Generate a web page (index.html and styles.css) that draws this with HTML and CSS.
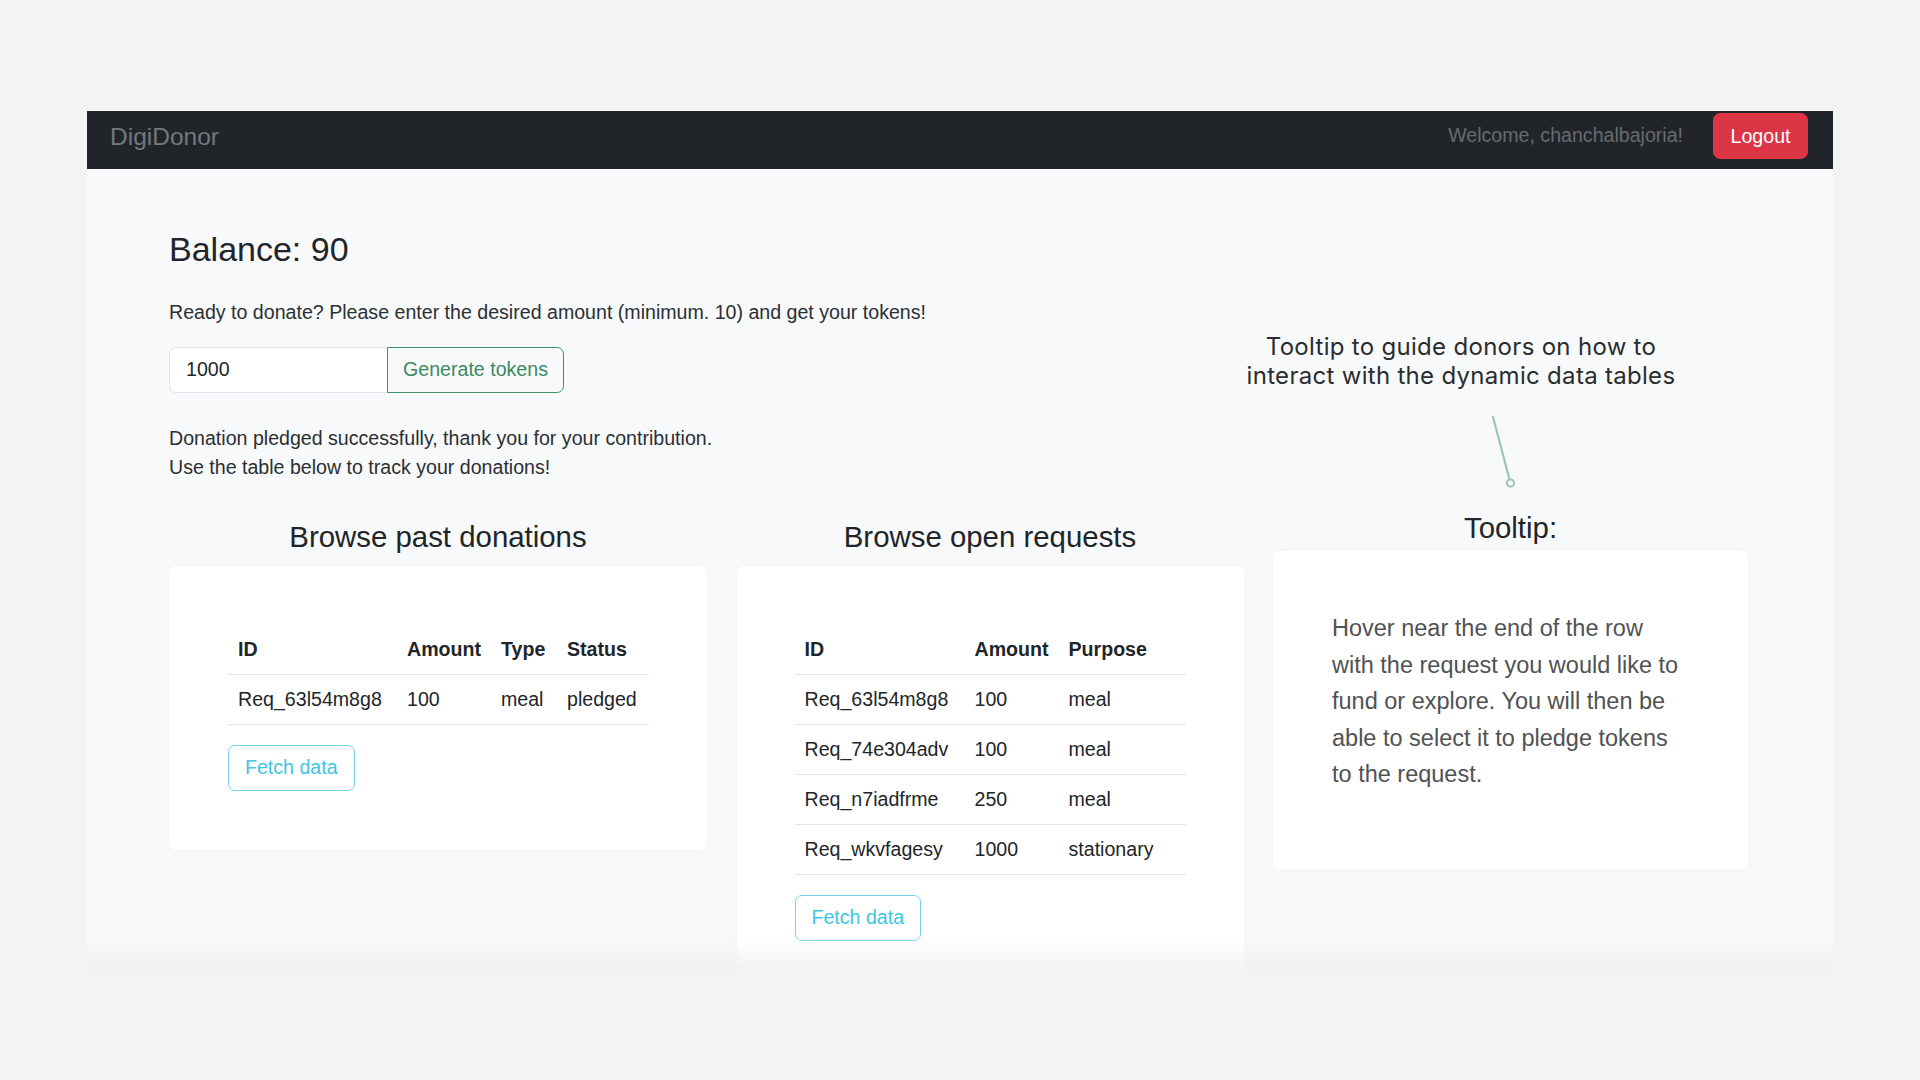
FILE: index.html
```html
<!DOCTYPE html>
<html lang="en">
<head>
<meta charset="utf-8">
<title>DigiDonor</title>
<link rel="stylesheet" href="styles.css">
</head>
<body>
<div class="page">
  <div class="frame">
    <nav class="navbar">
      <span class="brand">DigiDonor</span>
      <div class="nav-right">
        <span class="welcome">Welcome, chanchalbajoria!</span>
        <button class="btn-logout">Logout</button>
      </div>
    </nav>
    <main class="content">
      <h3 class="balance">Balance: 90</h3>
      <p class="intro">Ready to donate? Please enter the desired amount (minimum. 10) and get your tokens!</p>
      <div class="input-group">
        <input class="amount" type="text" value="1000">
        <button class="btn-generate">Generate tokens</button>
      </div>
      <p class="msg">Donation pledged successfully, thank you for your contribution.<br>Use the table below to track your donations!</p>

      <div class="columns">
        <section class="col">
          <h4 class="col-title">Browse past donations</h4>
          <div class="card">
            <table class="tbl tbl-past">
              <colgroup><col class="c-id"><col class="c-amt"><col class="c-type"><col class="c-status"></colgroup>
              <thead><tr><th>ID</th><th>Amount</th><th>Type</th><th>Status</th></tr></thead>
              <tbody><tr><td>Req_63l54m8g8</td><td>100</td><td>meal</td><td>pledged</td></tr></tbody>
            </table>
            <button class="btn-fetch">Fetch data</button>
          </div>
        </section>
        <section class="col">
          <h4 class="col-title">Browse open requests</h4>
          <div class="card card-open">
            <table class="tbl tbl-open">
              <colgroup><col class="c-id2"><col class="c-amt2"><col class="c-purpose"></colgroup>
              <thead><tr><th>ID</th><th>Amount</th><th>Purpose</th></tr></thead>
              <tbody>
                <tr><td>Req_63l54m8g8</td><td>100</td><td>meal</td></tr>
                <tr><td>Req_74e304adv</td><td>100</td><td>meal</td></tr>
                <tr><td>Req_n7iadfrme</td><td>250</td><td>meal</td></tr>
                <tr><td>Req_wkvfagesy</td><td>1000</td><td>stationary</td></tr>
              </tbody>
            </table>
            <button class="btn-fetch">Fetch data</button>
          </div>
        </section>
        <section class="col col-tip">
          <h4 class="col-title tip-title">Tooltip:</h4>
          <div class="card">
            <p class="tip-text">Hover near the end of the row with the request you would like to fund or explore. You will then be able to select it to pledge tokens to the request.</p>
          </div>
        </section>
      </div>
    </main>

    <div class="annotation">Tooltip to guide donors on how to<br>interact with the dynamic data tables</div>
    <svg class="connector" width="36" height="84" viewBox="0 0 36 84">
      <line x1="8" y1="7" x2="24.5" y2="69.5" stroke="#9cc6ba" stroke-width="2.2" stroke-linecap="round"/>
      <circle cx="25.5" cy="73" r="3.6" fill="#f8f9fa" stroke="#9cc6ba" stroke-width="2"/>
    </svg>
    <div class="fade"></div>
  </div>
</div>
</body>
</html>
```

FILE: styles.css
```css
* { box-sizing: border-box; }

html, body {
  margin: 0;
  padding: 0;
}

body {
  background: #f3f3f4;
  font-family: "Liberation Sans", Arial, sans-serif;
  color: #212529;
  width: 1920px;
  height: 1080px;
  overflow: hidden;
}

.page {
  padding: 111px 87px 0 87px;
}

.frame {
  position: relative;
  height: 858px;
  overflow: hidden;
  background: #f8f9fa;
}

/* Navbar */
.navbar {
  height: 58px;
  background: #212529;
  display: flex;
  align-items: center;
  justify-content: space-between;
  padding: 0 25px 8px 23px;
}

.brand {
  font-size: 24.5px;
  color: #74787d;
  line-height: 1;
  margin-top: 3px;
}

.nav-right {
  display: flex;
  align-items: center;
}

.welcome {
  font-size: 19.6px;
  color: #676b71;
  margin-right: 30px;
  margin-top: -2px;
}

.btn-logout {
  height: 46px;
  padding: 0 16.5px;
  background: #dc3545;
  border: 1px solid #dc3545;
  border-radius: 7px;
  color: #fff;
  font-family: "Liberation Sans", Arial, sans-serif;
  font-size: 19.6px;
}

/* Content */
.content {
  padding: 60px 85px 0 82px;
}

.balance {
  margin: 0 0 28.5px;
  font-size: 34px;
  font-weight: 400;
  line-height: 1.2;
  color: #212529;
}

.intro {
  margin: 0 0 19px;
  font-size: 19.6px;
  line-height: 29.4px;
  color: #2b2f33;
}

.input-group {
  display: flex;
  height: 46px;
  margin-bottom: 31px;
}

.amount {
  width: 218px;
  height: 46px;
  padding: 0 16px;
  border: 1px solid #e2e4e7;
  border-right: none;
  border-radius: 7px 0 0 7px;
  background: #fff;
  font-family: "Liberation Sans", Arial, sans-serif;
  font-size: 19.6px;
  color: #212529;
  outline: none;
}

.btn-generate {
  width: 177px;
  height: 46px;
  padding: 0;
  border: 1px solid #3f9068;
  border-radius: 0 7px 7px 0;
  background: transparent;
  color: #3a8a62;
  font-family: "Liberation Sans", Arial, sans-serif;
  font-size: 19.6px;
}

.msg {
  margin: 0 0 36.5px;
  font-size: 19.6px;
  line-height: 29.4px;
  color: #2b2f33;
}

/* Columns */
.columns {
  display: grid;
  grid-template-columns: 538px 507px 475px;
  column-gap: 29.5px;
  align-items: start;
}

.col-title {
  margin: 0 0 11.7px;
  font-size: 29.4px;
  font-weight: 400;
  line-height: 1.2;
  text-align: center;
  color: #212529;
}

.col-tip {
  margin-top: -9px;
}

.tip-title {
  margin-bottom: 6px;
}

.card {
  background: #fff;
  border-radius: 7px;
  padding: 59px;
  box-shadow: 0 0 14px rgba(0, 0, 0, 0.025);
}

.card-open {
  padding: 59px 58px;
}

/* Tables */
.tbl {
  width: 100%;
  border-collapse: collapse;
  table-layout: fixed;
  margin-bottom: 19.6px;
  font-family: "Liberation Sans", Arial, sans-serif;
  font-size: 19.6px;
  line-height: 29.4px;
  color: #212529;
}

.tbl th,
.tbl td {
  padding: 9.8px 9.8px 9.8px 10px;
  text-align: left;
  border-bottom: 1px solid #e3e5e8;
  white-space: nowrap;
}

.tbl th {
  font-weight: 700;
}

.c-id { width: 169px; }
.c-amt { width: 94px; }
.c-type { width: 66px; }
.c-status { width: 92px; }

.c-id2 { width: 170px; }
.c-amt2 { width: 94px; }
.c-purpose { width: 127px; }

.btn-fetch {
  display: block;
  height: 46px;
  padding: 0 16px;
  border: 1px solid #72d4ea;
  border-radius: 7px;
  background: transparent;
  color: #40c5e2;
  font-family: "Liberation Sans", Arial, sans-serif;
  font-size: 19.6px;
}

.tip-text {
  margin: 0 0 17px;
  font-size: 23.5px;
  line-height: 36.5px;
  color: #505254;
}

/* Annotation overlay */
.annotation {
  position: absolute;
  left: 1114px;
  top: 222px;
  width: 520px;
  text-align: center;
  font-family: Inter, "Liberation Sans", sans-serif;
  font-size: 24px;
  line-height: 28.5px;
  letter-spacing: 0.3px;
  color: #2a2c2e;
}

.connector {
  position: absolute;
  left: 1398px;
  top: 299px;
}

.fade {
  position: absolute;
  left: 0;
  right: 0;
  bottom: 0;
  height: 32px;
  background: linear-gradient(to bottom, rgba(243, 244, 246, 0), rgba(238, 239, 241, 0.75));
  pointer-events: none;
}
```
